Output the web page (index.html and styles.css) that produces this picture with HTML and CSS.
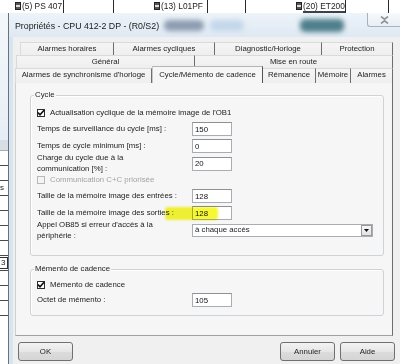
FILE: index.html
```html
<!DOCTYPE html>
<html>
<head>
    <title>Propriétés - CPU 412-2 DP - (R0/S2)</title>
    <link rel="stylesheet" href="styles.css">
</head>
<body>
    <div class="rack">
        <div class="slot slot-a"><span class="module-icon"></span>(5) PS 407</div>
        <div class="slot slot-b"></div>
        <div class="slot slot-c"><span class="module-icon"></span>(13) L01PF</div>
        <div class="slot slot-d"></div>
        <div class="slot slot-e"><span class="module-icon"></span><span class="module-name">(20) ET200</span></div>
        <div class="slot slot-f"></div>
        <div class="slot slot-g"></div>
    </div>

    <div class="workspace">
        <div class="side-table">
            <div class="side-top"></div>
            <div class="side-head"></div>
            <div class="side-row"></div>
            <div class="side-row"></div>
            <div class="side-row">ss</div>
            <div class="side-row"></div>
            <div class="side-row"></div>
            <div class="side-row"></div>
            <div class="side-row"></div>
            <div class="side-row"><span class="side-cell">3</span></div>
            <div class="side-row"></div>
            <div class="side-row"></div>
            <div class="side-row"></div>
        </div>

        <div class="dialog">
            <div class="titlebar">
                <span class="title">Propriétés - CPU 412-2 DP - (R0/S2)</span>
                <span class="smudge smudge-grey"></span>
                <span class="smudge smudge-light"></span>
                <span class="smudge smudge-teal"></span>
                <div class="close-btn">
                    <svg width="9" height="8" viewBox="0 0 9 8">
                        <path d="M1 0.5 L4.5 3.2 L8 0.5 M1 7.5 L4.5 4.8 L8 7.5" fill="none" stroke="#8a929b" stroke-width="1.6"/>
                    </svg>
                </div>
            </div>

            <div class="frame">
                <div class="client">
                    <div class="tab-row row-back">
                        <div class="tab">Alarmes horaires</div>
                        <div class="tab">Alarmes cycliques</div>
                        <div class="tab">Diagnostic/Horloge</div>
                        <div class="tab">Protection</div>
                    </div>
                    <div class="tab-row row-middle">
                        <div class="tab">Général</div>
                        <div class="tab">Mise en route</div>
                    </div>
                    <div class="tab-row row-front">
                        <div class="tab">Alarmes de synchronisme d'horloge</div>
                        <div class="tab tab-active">Cycle/Mémento de cadence</div>
                        <div class="tab">Rémanence</div>
                        <div class="tab">Mémoire</div>
                        <div class="tab">Alarmes</div>
                    </div>

                    <div class="tab-panel">
                        <div class="group group-cycle">
                            <div class="group-title">Cycle</div>
                            <div class="group-body">
                                <div class="check-row">
                                    <span class="check checked"><svg width="8" height="8" viewBox="0 0 8 8"><path d="M1 3.6 L3 5.8 L7 1.2" fill="none" stroke="#111" stroke-width="1.6"/></svg></span>
                                    <span>Actualisation cyclique de la mémoire image de l'OB1</span>
                                </div>
                                <div class="field-row">
                                    <span class="field-label">Temps de surveillance du cycle [ms] :</span>
                                    <input class="num-input" type="text" value="150">
                                </div>
                                <div class="field-row">
                                    <span class="field-label">Temps de cycle minimum [ms] :</span>
                                    <input class="num-input" type="text" value="0">
                                </div>
                                <div class="field-row tall">
                                    <span class="field-label">Charge du cycle due à la<br>communication [%] :</span>
                                    <input class="num-input" type="text" value="20">
                                </div>
                                <div class="check-row disabled after-tall">
                                    <span class="check"></span>
                                    <span>Communication C+C priorisée</span>
                                </div>
                                <div class="field-row">
                                    <span class="field-label">Taille de la mémoire image des entrées :</span>
                                    <input class="num-input" type="text" value="128">
                                </div>
                                <div class="field-row marked">
                                    <span class="field-label">Taille de la mémoire image des sorties :</span>
                                    <input class="num-input" type="text" value="128">
                                    <span class="highlighter"></span>
                                </div>
                                <div class="field-row tall">
                                    <span class="field-label">Appel OB85 si erreur d'accès à la<br>périphérie :</span>
                                    <div class="combo">
                                        <span class="combo-value">à chaque accès</span>
                                        <span class="combo-arrow">
                                            <svg width="5" height="3" viewBox="0 0 5 3"><path d="M0 0 H5 L2.5 3 Z" fill="#111"/></svg>
                                        </span>
                                    </div>
                                </div>
                            </div>
                        </div>

                        <div class="group group-clock">
                            <div class="group-title">Mémento de cadence</div>
                            <div class="group-body">
                                <div class="check-row">
                                    <span class="check checked"><svg width="8" height="8" viewBox="0 0 8 8"><path d="M1 3.6 L3 5.8 L7 1.2" fill="none" stroke="#111" stroke-width="1.6"/></svg></span>
                                    <span>Mémento de cadence</span>
                                </div>
                                <div class="field-row">
                                    <span class="field-label">Octet de mémento :</span>
                                    <input class="num-input" type="text" value="105">
                                </div>
                            </div>
                        </div>
                    </div>

                    <div class="buttons">
                        <button class="btn">OK</button>
                        <span class="spacer"></span>
                        <button class="btn">Annuler</button>
                        <button class="btn">Aide</button>
                    </div>
                </div>
            </div>
        </div>
    </div>
</body>
</html>
```

FILE: styles.css
```css
body {
    margin: 0;
    width: 400px;
    height: 364px;
    overflow: hidden;
    background: #ffffff;
    font-family: "Liberation Sans", Arial, sans-serif;
    font-size: 7.8px;
    color: #1c1c1c;
}

/* Hardware rack behind the dialog */
.rack {
    display: flex;
    height: 13px;
    background: #ffffff;
    overflow: hidden;
    font-size: 8.4px;
    line-height: 9px;
}

.slot {
    box-sizing: border-box;
    border-right: 1px solid #2a2a2a;
    display: flex;
    align-items: flex-start;
    padding-top: 2px;
    white-space: nowrap;
    overflow: hidden;
}

.slot-a { width: 64px; padding-left: 15px; }
.slot-b { width: 50px; }
.slot-c { width: 94px; padding-left: 40px; }
.slot-d { width: 38px; }
.slot-e { width: 100px; padding-left: 50px; }
.slot-f { width: 43px; }
.slot-g { flex: 1; border-right: none; }

.module-icon {
    box-sizing: border-box;
    width: 6px;
    height: 8px;
    margin-right: 1px;
    border: 1px solid #222;
    background: linear-gradient(#555 0 40%, #dcdcdc 40% 60%, #555 60%);
    flex-shrink: 0;
}

.module-name {
    border-bottom: 2px solid #3a4446;
}

.workspace {
    display: flex;
    height: 351px;
}

/* Table of the window behind, left of the dialog */
.side-table {
    width: 8px;
    flex-shrink: 0;
    overflow: hidden;
    font-size: 8px;
    line-height: 14px;
    white-space: nowrap;
}

.side-top {
    height: 127px;
    background: linear-gradient(#f4f8fb, #e6eef5);
}

.side-head {
    height: 10px;
    background: #d9dee4;
    border-bottom: 1px solid #a7adb4;
}

.side-row {
    height: 14px;
    border-bottom: 1px solid #4a4a4a;
    background: #ffffff;
    margin-left: -4px;
}

.side-cell {
    display: inline-block;
    border: 1px solid #333;
    line-height: 10px;
    padding: 0 2px;
    margin-left: 2px;
}

/* Dialog */
.dialog {
    flex: 1;
    display: flex;
    flex-direction: column;
    border-left: 1px solid #66737f;
    background: #d8e4ef;
}

.titlebar {
    height: 24px;
    display: flex;
    align-items: center;
    padding-left: 6px;
    background: linear-gradient(#edf3f9, #dfe9f3);
    font-size: 8.8px;
    color: #1a1a1a;
    white-space: nowrap;
}

.title {
    padding-top: 1px;
}

.smudge {
    height: 11px;
    border-radius: 5px;
    filter: blur(2.5px);
}

.smudge-grey {
    width: 40px;
    margin-left: 5px;
    background: #8d9db0;
}

.smudge-light {
    width: 34px;
    margin-left: 6px;
    background: #c3d7ea;
}

.smudge-teal {
    width: 44px;
    height: 13px;
    margin-left: 56px;
    background: #4e7f8b;
}

.close-btn {
    align-self: flex-start;
    margin-left: auto;
    width: 33px;
    height: 14px;
    box-sizing: border-box;
    border: 1px solid #a5b2c0;
    border-top: none;
    border-right: none;
    border-radius: 0 0 0 3px;
    background: linear-gradient(#f7f9fb, #e8eef4);
    display: flex;
    align-items: center;
    justify-content: center;
}

.frame {
    flex: 1;
    padding-left: 4px;
    display: flex;
}

.client {
    flex: 1;
    background: #f0f0f0;
    padding-top: 5px;
}

/* Tabs, three staggered rows */
.tab-row {
    display: grid;
    height: 13px;
}

.row-back {
    margin-left: 7px;
    grid-template-columns: 94px 101px 107px 71px;
}

.row-middle {
    margin-left: 3px;
    grid-template-columns: 179px 198px;
}

.row-front {
    margin-left: 2px;
    height: 14px;
    grid-template-columns: 137px 111px 53px 35px 42px;
}

.tab {
    box-sizing: border-box;
    border-top: 1px solid #dadada;
    border-right: 1px solid #6e6e6e;
    background: linear-gradient(#f5f5f5, #eeeeee);
    text-align: center;
    line-height: 12px;
    white-space: nowrap;
    overflow: hidden;
}

.tab:first-child {
    border-left: 1px solid #dadada;
}

.tab-active {
    position: relative;
    z-index: 1;
    margin-top: -2px;
    height: 17px;
    border-top-color: #b5b5b5;
    border-left: 1px solid #c8c8c8;
    border-right-color: #555555;
    background: #f6f6f6;
    line-height: 15px;
}

.tab-panel {
    box-sizing: border-box;
    margin-left: 2px;
    width: 378px;
    height: 254px;
    border: 1px solid #a0a0a0;
    border-left-color: #cfcfcf;
    border-right-color: #6e6e6e;
    background: #f6f6f6;
    padding-top: 12px;
}

/* Group boxes */
.group {
    margin: 0 8px 0 14px;
    border: 1px solid #cdd3d9;
    border-radius: 3px;
    box-shadow: inset 1px 1px 0 #ffffff;
    padding-left: 6px;
}

.group-title {
    width: fit-content;
    margin-top: -6px;
    margin-left: -3px;
    padding: 0 1px;
    line-height: 10px;
    background: #f6f6f6;
}

.group-body {
    display: flex;
    flex-direction: column;
    gap: 3px;
    line-height: 10.5px;
}

.group-cycle .group-body {
    padding-top: 7px;
    padding-bottom: 14px;
}

.group-clock {
    margin-top: 13px;
}

.group-clock .group-body {
    padding-top: 5px;
    padding-bottom: 8px;
    gap: 2px;
}

.check-row {
    display: flex;
    align-items: center;
    height: 12px;
    gap: 5px;
}

.check {
    box-sizing: border-box;
    width: 8px;
    height: 8px;
    border: 1px solid #2d2d2d;
    background: #ffffff;
    display: flex;
    align-items: center;
    justify-content: center;
}

.check svg {
    margin: -1px;
}

.check-row.disabled {
    color: #a3a3a3;
}

.check-row.disabled .check {
    border-color: #b8b8b8;
    background: #f4f4f4;
}

.field-row {
    display: flex;
    align-items: center;
    min-height: 14px;
}

.field-row.tall {
    margin-top: -3px;
}

.after-tall {
    margin-top: -3px;
}

.field-label {
    width: 155px;
    flex-shrink: 0;
    white-space: nowrap;
}

.num-input {
    box-sizing: border-box;
    width: 40px;
    height: 14px;
    margin: 0;
    padding: 0 2px;
    border: 1px solid #a9adb3;
    border-top-color: #8d9095;
    background: #ffffff;
    font: inherit;
    color: #111;
    outline: none;
}

.combo {
    box-sizing: border-box;
    width: 181px;
    height: 13px;
    border: 1px solid #a9adb3;
    background: #ffffff;
    display: flex;
    align-items: center;
}

.combo-value {
    flex: 1;
    padding-left: 2px;
}

.combo-arrow {
    box-sizing: border-box;
    width: 11px;
    height: 11px;
    border: 1px solid #9a9a9a;
    background: linear-gradient(#f7f7f7, #e2e2e2);
    display: flex;
    align-items: center;
    justify-content: center;
}

/* Yellow marker stroke drawn over the label */
.marked {
    position: relative;
}

.highlighter {
    position: absolute;
    left: 128px;
    top: 1px;
    width: 53px;
    height: 13px;
    border-radius: 3px;
    background: rgba(246, 247, 30, 0.9);
    mix-blend-mode: multiply;
    filter: blur(0.8px);
}

/* Dialog buttons */
.buttons {
    display: flex;
    gap: 5px;
    width: 377px;
    margin: 6px 0 0 5px;
}

.spacer {
    flex: 1;
}

.btn {
    width: 55px;
    height: 19px;
    border: 1px solid #707070;
    border-radius: 3px;
    background: linear-gradient(#f3f3f3, #e6e6e6 50%, #dcdcdc 51%, #d5d5d5);
    font: inherit;
    color: #1c1c1c;
    padding: 0;
}
```
